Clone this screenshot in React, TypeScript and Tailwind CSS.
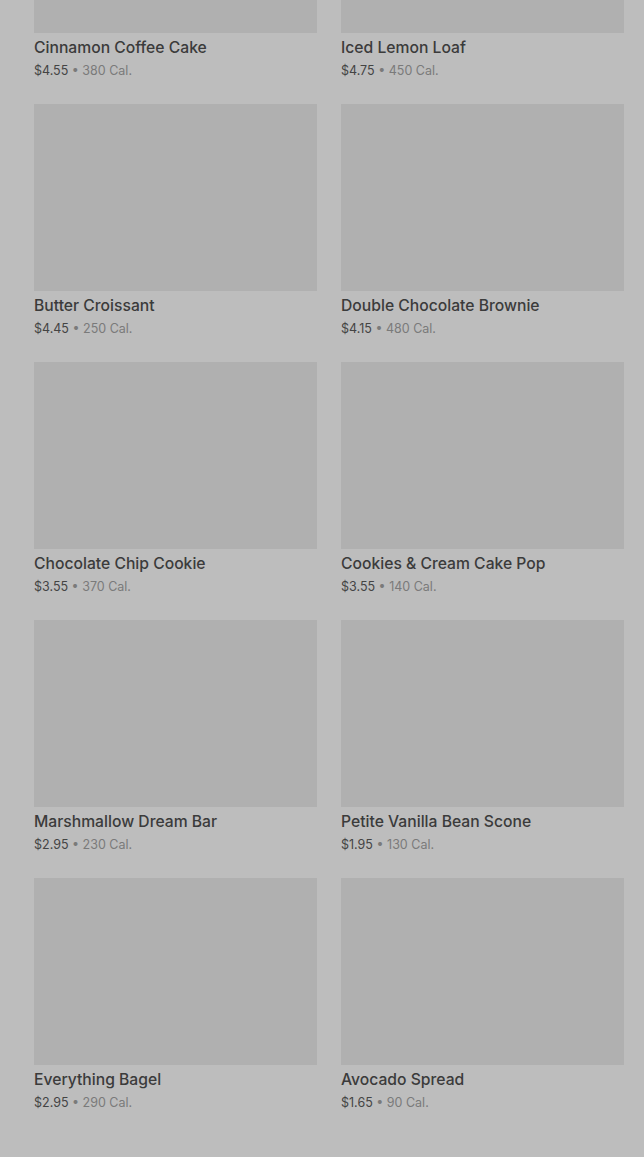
import React from "react";

const items = [
  { name: "Cinnamon Coffee Cake", price: "$4.55", cal: "380 Cal." },
  { name: "Iced Lemon Loaf", price: "$4.75", cal: "450 Cal." },
  { name: "Butter Croissant", price: "$4.45", cal: "250 Cal." },
  { name: "Double Chocolate Brownie", price: "$4.15", cal: "480 Cal." },
  { name: "Chocolate Chip Cookie", price: "$3.55", cal: "370 Cal." },
  { name: "Cookies & Cream Cake Pop", price: "$3.55", cal: "140 Cal." },
  { name: "Marshmallow Dream Bar", price: "$2.95", cal: "230 Cal." },
  { name: "Petite Vanilla Bean Scone", price: "$1.95", cal: "130 Cal." },
  { name: "Everything Bagel", price: "$2.95", cal: "290 Cal." },
  { name: "Avocado Spread", price: "$1.65", cal: "90 Cal." },
];

export default function App() {
  return (
    <div
      className="w-[644px] h-[1157px] overflow-hidden bg-[#bdbdbd]"
      style={{ fontFamily: "Inter, Roboto, 'Noto Sans', sans-serif" }}
    >
      <div className="mt-[-154px] pl-[34px] pr-[20px] grid grid-cols-2 gap-x-[24px] gap-y-[23px]">
        {items.map((it) => (
          <div key={it.name} className="flex flex-col">
            <div className="h-[187px] bg-[#b0b0b0]" />
            <div className="mt-[3px] text-[15.7px] leading-[24px] font-medium text-[#3b3b3b]">
              {it.name}
            </div>
            <div className="mt-[1px] text-[12.5px] leading-[20px] text-[#444444]">
              {it.price}
              <span className="text-[#7a7a7a]"> • {it.cal}</span>
            </div>
          </div>
        ))}
      </div>
    </div>
  );
}
